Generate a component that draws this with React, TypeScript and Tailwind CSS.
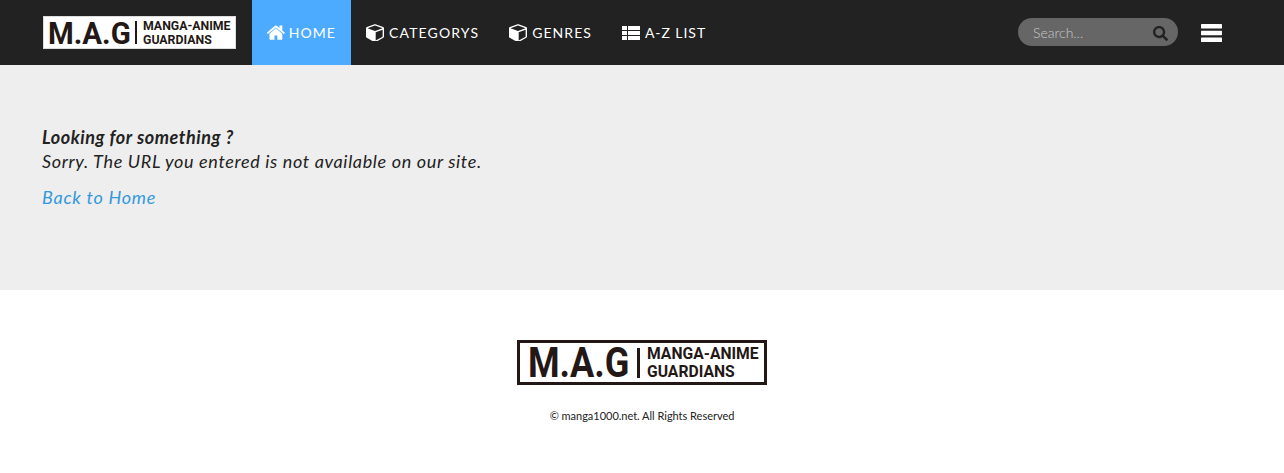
import { FaSearch } from "react-icons/fa";

function CubeIcon() {
  return (
    <svg viewBox="0 128 1664 1536" className="h-[17px] w-[18px] fill-current">
      <path d="M896 1629l640-349v-636l-640 233v752zm-64-865l698-254-698-254-698 254zm832-252v768q0 35-18 65t-49 47l-704 384q-28 16-61 16t-61-16l-704-384q-31-17-49-47t-18-65v-768q0-40 23-73t61-47l704-256q22-8 44-8t44 8l704 256q38 14 61 47t23 73z" />
    </svg>
  );
}

function HomeIcon() {
  return (
    <svg viewBox="97 230 1600 1306" className="h-[15px] w-[18px] fill-current">
      <path d="M1472 992v480q0 26-19 45t-45 19h-384v-384h-256v384h-384q-26 0-45-19t-19-45v-480q0-1 .5-3t.5-3l575-474 575 474q1 2 1 6zm223-69l-62 74q-8 9-21 11h-3q-13 0-21-7l-692-577-692 577q-12 8-24 7-13-2-21-11l-62-74q-8-10-7-23.5t11-21.5l719-599q32-26 76-26t76 26l244 204v-195q0-14 9-23t23-9h192q14 0 23 9t9 23v408l219 182q10 8 11 21.5t-7 23.5z" />
    </svg>
  );
}

function ListIcon() {
  return (
    <svg viewBox="0 0 18 14" className="h-[14px] w-[18px] fill-current">
      <rect y="0" width="5" height="4" />
      <rect x="6" y="0" width="12" height="4" />
      <rect y="5" width="5" height="4" />
      <rect x="6" y="5" width="12" height="4" />
      <rect y="10" width="5" height="4" />
      <rect x="6" y="10" width="12" height="4" />
    </svg>
  );
}

function BarsIcon() {
  return (
    <svg viewBox="0 0 21 18" className="h-[18px] w-[21px] fill-current text-white">
      <rect width="21" height="4.4" rx="0.6" />
      <rect y="6.8" width="21" height="4.4" rx="0.6" />
      <rect y="13.6" width="21" height="4.4" rx="0.6" />
    </svg>
  );
}

const navItems = [
  { label: "CATEGORYS", icon: <CubeIcon />, tracking: "tracking-[1.15px]" },
  { label: "GENRES", icon: <CubeIcon />, tracking: "tracking-[1.05px]" },
  { label: "A-Z LIST", icon: <ListIcon />, tracking: "tracking-[0.95px]" },
];

function HeaderLogo() {
  return (
    <div className="ml-[1px] flex h-[33px] w-[193px] items-center border border-[#dddddd] bg-white pl-[4px] text-[#231815] [font-family:'Roboto',sans-serif]">
      <span className="w-[87px] origin-left scale-x-[0.92] text-[32px] leading-none font-bold">M.A.G</span>
      <span className="mr-[6px] h-[23px] w-[2px] bg-[#231815]" />
      <div className="flex flex-col text-[12.3px] leading-[14px] font-bold">
        <span>MANGA-ANIME</span>
        <span>GUARDIANS</span>
      </div>
    </div>
  );
}

function FooterLogo() {
  return (
    <div className="flex h-[45px] w-[250px] items-center border-[3px] border-[#231815] bg-white pl-[8px] text-[#231815] [font-family:'Roboto',sans-serif]">
      <span className="w-[109px] origin-left scale-x-[0.86] text-[42px] leading-none font-bold">M.A.G</span>
      <span className="mr-[7px] h-[30px] w-[3px] bg-[#231815]" />
      <div className="flex flex-col text-[15.7px] leading-[18px] font-bold">
        <span>MANGA-ANIME</span>
        <span>GUARDIANS</span>
      </div>
    </div>
  );
}

export default function App() {
  return (
    <div className="min-h-[473px] bg-white [font-family:'Lato',sans-serif]">
      <header className="flex h-[65px] items-center bg-[#222222] pr-[62px] pl-[42px]">
        <HeaderLogo />
        <nav className="ml-[16px] flex h-full items-center text-[14px] tracking-[1.05px] text-white">
          <a className="flex h-full w-[99px] items-center gap-[4px] bg-[#4dabff] px-[15px]">
            <HomeIcon />
            HOME
          </a>
          {navItems.map((item) => (
            <a key={item.label} className={`flex h-full items-center gap-[5px] px-[15px] ${item.tracking}`}>
              {item.icon}
              {item.label}
            </a>
          ))}
        </nav>
        <div className="ml-auto flex items-center gap-[23px]">
          <div className="mb-[2px] flex h-[28px] w-[160px] items-center justify-between rounded-full bg-[#666666] pr-[10px] pl-[15px]">
            <span className="mt-[1px] text-[14px] font-light text-[#c8c8c8]">Search...</span>
            <FaSearch className="mt-[3px] text-[15px] text-[#222222]" />
          </div>
          <BarsIcon />
        </div>
      </header>
      <main className="h-[225px] bg-[#eeeeee] px-[42px] pt-[60px] text-[18px] tracking-[0.65px] text-[#222222] italic">
        <p className="h-[24px] leading-[25px] font-bold tracking-[0.55px]">Looking for something ?</p>
        <p className="h-[25px] leading-[25px]">Sorry. The URL you entered is not available on our site.</p>
        <a className="mt-[11px] block leading-[25px] tracking-[0.75px] text-[#3498db]">Back to Home</a>
      </main>
      <footer className="flex flex-col items-center pt-[50px]">
        <FooterLogo />
        <p className="mt-[24px] text-[11px] leading-[14px] tracking-[-0.02px] text-[#222222]">© manga1000.net. All Rights Reserved</p>
      </footer>
    </div>
  );
}
